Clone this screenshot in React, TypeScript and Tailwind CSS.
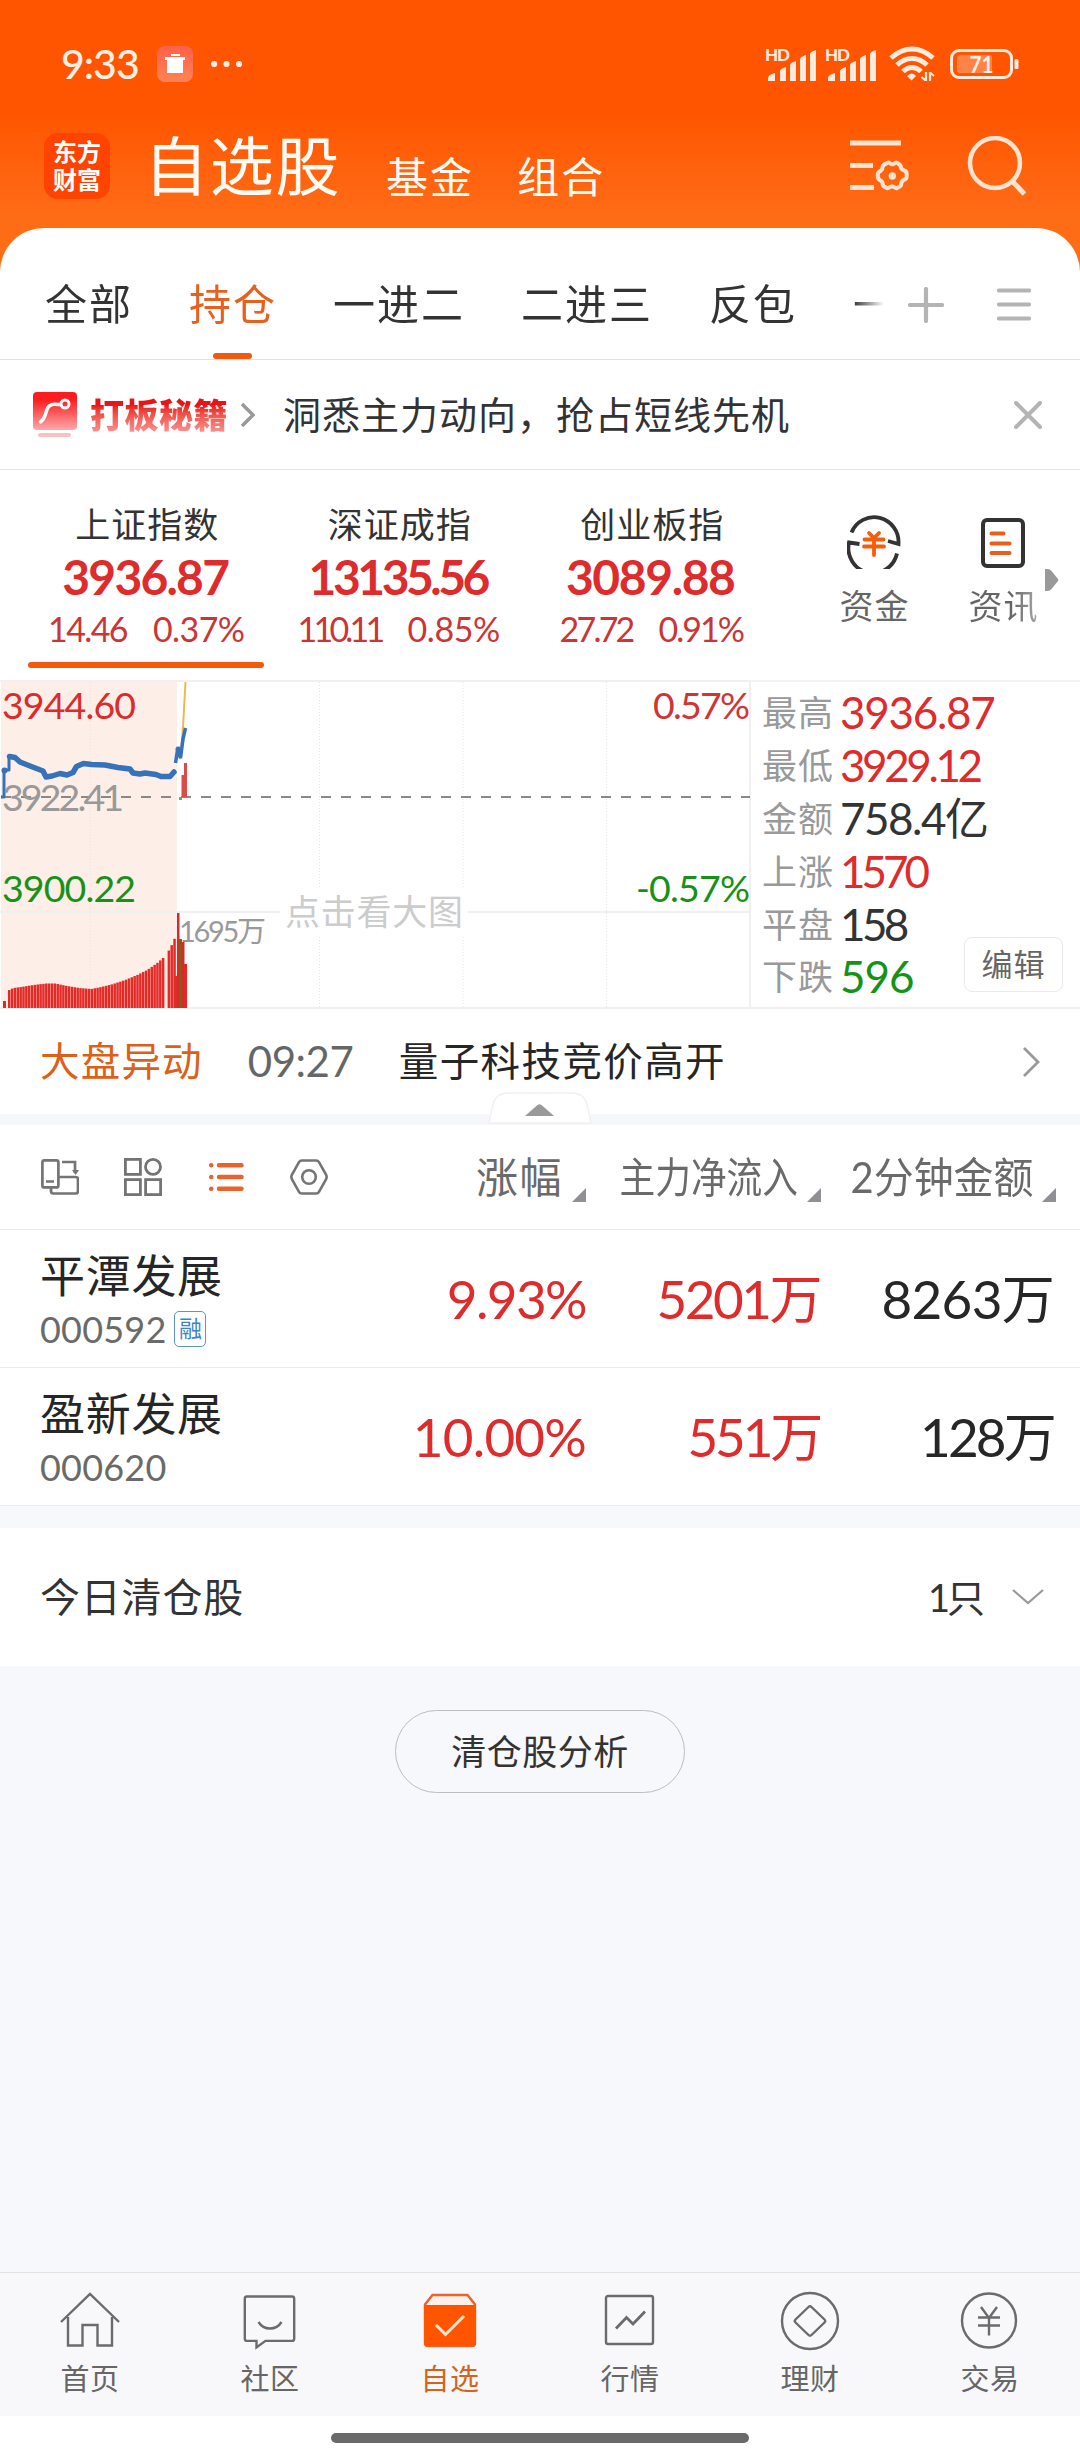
import React from 'react';

const RED = 'text-[#de2b2b]';
const GREEN = 'text-[#169216]';

const groups = ['全部', '持仓', '一进二', '二进三', '反包', '一'];

const indices = [
  { name: '上证指数', value: '3936.87', change: '14.46', percent: '0.37%', active: true, track: 'tracking-[-1.8px]', cTrack: 'tracking-[-1.6px]', pTrack: 'tracking-[-0.6px]' },
  { name: '深证成指', value: '13135.56', change: '110.11', percent: '0.85%', active: false, track: 'tracking-[-3.5px]', cTrack: 'tracking-[-3.8px]', pTrack: 'tracking-[-0.4px]' },
  { name: '创业板指', value: '3089.88', change: '27.72', percent: '0.91%', active: false, track: 'tracking-[-1.4px]', cTrack: 'tracking-[-2.8px]', pTrack: 'tracking-[-2px]' },
];

const stats = [
  { label: '最高', value: '3936.87', color: RED, track: 'tracking-[-1.3px]' },
  { label: '最低', value: '3929.12', color: RED, track: 'tracking-[-3.4px]' },
  { label: '金额', value: '758.4亿', color: 'text-[#333]', track: 'tracking-[-1.5px]' },
  { label: '上涨', value: '1570', color: RED, track: 'tracking-[-4px]' },
  { label: '平盘', value: '158', color: 'text-[#333]', track: 'tracking-[-3.6px]' },
  { label: '下跌', value: '596', color: GREEN, track: 'tracking-[-1px]' },
];

const stocks = [
  {
    name: '平潭发展', code: '000592', margin: true,
    cells: [
      { text: '9.93%', color: RED, track: 'tracking-[-1.6px]' },
      { text: '5201万', color: RED, track: 'tracking-[-2.5px]' },
      { text: '8263万', color: 'text-[#262626]', track: 'tracking-[-0.7px]' },
    ],
  },
  {
    name: '盈新发展', code: '000620', margin: false,
    cells: [
      { text: '10.00%', color: RED, track: 'tracking-[-0.8px]' },
      { text: '551万', color: RED, track: 'tracking-[-3.2px]' },
      { text: '128万', color: 'text-[#262626]', track: 'tracking-[-2.8px]' },
    ],
  },
];

// Volume profile as [x, top] pairs, the bars in between are interpolated
const volumeShape: [number, number][] = [
  [8, 990], [12, 988], [20, 987], [32, 985], [45, 983.5], [54, 983.5], [66, 986],
  [78, 988], [90, 989], [100, 987], [112, 984], [124, 980], [136, 975], [146, 970],
  [156, 963], [163, 957], [168, 950], [171, 944], [175, 935],
];

const volumeTop = (x: number) => {
  const i = volumeShape.findIndex(([px]) => px >= x);
  if (i <= 0) return volumeShape[i === 0 ? 0 : volumeShape.length - 1][1];
  const [x0, y0] = volumeShape[i - 1];
  const [x1, y1] = volumeShape[i];
  return y0 + ((y1 - y0) * (x - x0)) / (x1 - x0);
};

const volumeBars = Array.from({ length: 59 }, (_, i) => 8 + i * 2.85).filter((_, i) => i !== 55);

const SignalIcon = () => (
  <svg width="50" height="34" viewBox="0 0 50 34" fill="#ffeadd" className="block overflow-visible">
    <text x="-1" y="14" fontSize="17" fontWeight="900" fontFamily="Lato, sans-serif" textLength="25">HD</text>
    <path d="M2 34v-3q0-3 7-5v8z M14 34v-10q0-2 6-4v14z M24 34v-16q0-2 6-4v20z M34 34v-22q0-2 6-4v26z M44 34V7q0-2 6-4v31z" />
  </svg>
);

const WifiIcon = () => (
  <svg width="46" height="36" viewBox="0 0 46 36" fill="none" stroke="#ffeadd" strokeWidth="5">
    <path d="M2 12Q12 3 23 3t21 9" />
    <path d="M8 19Q15 12.500 23 12.500t15 6.500" />
    <path d="M14 25.500Q18 21.500 23 21.500t9 4" />
    <path d="M18 30q5-5 9 0l-4.500 4.500z" fill="#ffeadd" stroke="none" />
    <path d="M37 26v9M32.500 31l4 3.500M41 35v-9M45 30l-4-3.500" strokeWidth="2.200" />
  </svg>
);

const BatteryIcon = () => (
  <svg width="70" height="30" viewBox="0 0 70 30">
    <rect x="1.500" y="1.500" width="60" height="27" rx="7.500" fill="none" stroke="#ffeadd" strokeWidth="3" />
    <rect x="7" y="6" width="35" height="18" rx="2.500" fill="#ff8346" />
    <rect x="64.500" y="10" width="4" height="10" rx="1.500" fill="#ffeadd" />
    <text x="19.500" y="23.500" fontSize="23" fontWeight="700" fontFamily="Lato, sans-serif" fill="#fff0e6" textLength="24" lengthAdjust="spacingAndGlyphs">71</text>
  </svg>
);

const FilterIcon = () => (
  <svg width="60" height="54" viewBox="0 0 60 54" fill="none" stroke="#ffe3cf" strokeWidth="5">
    <path d="M0 4h51M0 26.500h23M0 48.500h24" />
    <path d="M36.500 24.500q2-2 3.800 0 2 1.600 4 0 2-2 4 0l2.300 2.200q0 3 3 4.600 3 .7 3 3.200v3.500q0 2-3 3-2.600 1.700-2.400 4.600-.5 2-3.900 3.400-1.500.5-3-1-2.300-1-4.300 0-2.300 2-4 .5-3-1-3.400-3.400 0-2.600-2-3.600-2.600-1.200-2.800-3.500v-3q.3-2.200 3-3.200 2-1.600 1.800-4 .4-2.300 3.900-3.300z" strokeWidth="4" strokeLinejoin="round" />
    <circle cx="42.300" cy="37" r="3.700" fill="#ffe3cf" stroke="none" />
  </svg>
);

const SearchIcon = () => (
  <svg width="60" height="60" viewBox="0 0 60 60" fill="none" stroke="#ffe3cf" strokeWidth="4.500">
    <circle cx="28" cy="27" r="25" />
    <path d="M45 45l12.500 13" strokeWidth="5" />
  </svg>
);

const PromoIcon = () => (
  <svg width="44" height="45" viewBox="0 0 44 45">
    <defs>
      <linearGradient id="promo" x1="0" y1="0" x2="0" y2="1">
        <stop offset="0.2" stopColor="#fb1d20" />
        <stop offset="1" stopColor="#fba9aa" />
      </linearGradient>
    </defs>
    <rect width="44" height="38" rx="4" fill="url(#promo)" />
    <rect x="5" y="41" width="33" height="4" rx="2" fill="#f8c1c3" />
    <path d="M7.500 30q4-3 6-11t11-6.500h3" fill="none" stroke="#fff" strokeWidth="3.500" strokeLinecap="round" />
    <circle cx="32" cy="12" r="4" fill="none" stroke="#fff" strokeWidth="3" />
  </svg>
);

const FundsIcon = () => (
  <svg width="54" height="54" viewBox="0 0 54 54" fill="none" stroke="#333" strokeWidth="3.800">
    <path d="M4.500 17.500A24.500 25 0 0 1 51.500 29l-10.500-3" />
    <path d="M50 38.500A24.500 25 0 0 1 2 27.500l10.500 1.500" />
    <path d="M22 18l5 5 5-5M17.500 24.500h19M17 31.500h20M27 23v17" stroke="#f55c0c" strokeLinecap="round" />
  </svg>
);

const NewsIcon = () => (
  <svg width="44" height="50" viewBox="0 0 44 50" fill="none" stroke="#333" strokeWidth="4">
    <rect x="2" y="2" width="40" height="46" rx="4" />
    <path d="M10.500 15.500h12M10.500 25.500h18M10.500 35h18" stroke="#ea5f1d" strokeLinecap="round" />
  </svg>
);

const IntradayChart = () => (
  <svg width="751" height="328" viewBox="0 680 751 328" className="block" fontFamily="Lato, 'Noto Sans CJK SC', sans-serif">
    <rect x="1" y="682" width="176" height="326" fill="#fdeee8" />
    <path d="M0 681h751M0 912h751" stroke="#f0f0f0" strokeWidth="2" />
    <path d="M750 681v327" stroke="#f0f0f0" strokeWidth="2" />
    <path d="M90 682v326M319.500 682v326M463 682v326M606.500 682v326" stroke="#e6e6e6" strokeDasharray="1 2" />
    <path d="M1 797h749" stroke="#888" strokeWidth="2" strokeDasharray="10 10" />
    <rect x="280" y="887" width="188" height="50" fill="#fff" />

    {/* Volume */}
    <rect x="3" y="1001" width="3" height="7" fill="#e02828" />
    {volumeBars.map(x => (
      <rect key={x} x={x} y={volumeTop(x)} width="2.5" height={1008 - volumeTop(x)} fill="#e42a27" />
    ))}
    <rect x="174" y="976" width="4" height="32" fill="#e42a27" />
    <rect x="177" y="913" width="2.5" height="95" fill="#d42c2c" />
    <rect x="179" y="939" width="3" height="69" fill="#7a6412" />
    <rect x="182" y="942" width="2.500" height="66" fill="#d42c2c" />
    <rect x="184" y="964" width="3" height="44" fill="#ee2424" />

    {/* Price */}
    <path d="M1 797h3v-27h5v-13" fill="none" stroke="#3572b9" strokeWidth="3" strokeLinejoin="round" />
    <circle cx="4.500" cy="770.500" r="3" fill="#3572b9" />
    <path d="M9.500 756.500l5.500 1 5 4.500 10 4 13 5 3 6 6-1 8-2.500 7 1.500 6-2.500 3.500-6 7-3 8 1 13.500.5 13 2.500 12 1.500 3 4 7 1 5-1 11 1.500 5 2h9l4-4.500" fill="none" stroke="#3572b9" strokeWidth="5.500" strokeLinejoin="round" strokeLinecap="round" />
    <path d="M175.500 748l5 11 2.500-32 2.500-45" fill="none" stroke="#efb94f" strokeWidth="2" />
    <path d="M175.500 763l2.500-16 2.500 11 2.500-19 2.500-11" fill="none" stroke="#3572b9" strokeWidth="3.500" />
    <path d="M181.500 775h2.500v-12h3v34h-5.500z" fill="#dd4b48" />
    <rect x="179" y="797" width="3" height="3" fill="#6fae4e" />

    <g fontSize="37.5">
      <text x="2" y="719" textLength="134" fill="#dc2b2b">3944.60</text>
      <text x="2" y="811" textLength="122" fill="#999">3922.41</text>
      <text x="2" y="902" textLength="134" fill="#169216">3900.22</text>
      <text x="653" y="719" textLength="97" fill="#d13434">0.57%</text>
      <text x="636" y="902" textLength="114" fill="#169216">-0.57%</text>
    </g>
    <text x="179" y="942" fontSize="29" textLength="87" fill="#999">1695万</text>
    <text x="285" y="925" fontSize="35" textLength="178" fill="#ccc">点击看大图</text>
  </svg>
);

const SortMark = () => (
  <svg width="14" height="14" viewBox="0 0 14 14" className="block shrink-0">
    <path d="M14 0v14H0z" fill="#8f8f94" />
  </svg>
);

const ToolIcons = () => (
  <div className="flex items-center">
    <svg width="38" height="36" viewBox="0 0 38 36" fill="none" stroke="#747474" strokeWidth="2.700">
      <rect x="1.400" y="1.400" width="16" height="27" rx="2" />
      <path d="M5 22.500h8M10 29v3q0 2.500 2.500 2.500h22q2.500 0 2.500-2.500V20q0-2-2.500-2H18M21 3h13v11" />
      <path d="M31 11h7l-3.500 5z" fill="#747474" stroke="none" />
    </svg>
    <svg width="38" height="38" viewBox="0 0 38 38" fill="none" stroke="#747474" strokeWidth="2.800" className="ml-[45px]">
      <rect x="1.400" y="1.400" width="15" height="15" />
      <circle cx="29" cy="8.900" r="7.500" />
      <rect x="1.400" y="21.600" width="15" height="15" />
      <rect x="21.600" y="21.600" width="15" height="15" />
    </svg>
    <svg width="36" height="30" viewBox="0 0 36 30" fill="none" stroke="#e8642a" strokeWidth="4.500" strokeLinecap="round" className="ml-[47px]">
      <path d="M2.200 3.200h.1M10 3.200h22.500M2.200 15h.1M10 15h22.500M2.200 26.800h.1M10 26.800h22.500" />
    </svg>
    <svg width="38" height="36" viewBox="0 0 38 36" fill="none" stroke="#747474" strokeWidth="2.600" className="ml-[45px]">
      <path d="M12 1.500h14q2 0 3 1.700l7 12.500q1.300 2.300 0 4.600l-7 12.500q-1 1.700-3 1.700H12q-2 0-3-1.700L2 20.300q-1.300-2.300 0-4.600L9 3.200q1-1.700 3-1.700z" />
      <circle cx="19" cy="18" r="6.800" />
    </svg>
  </div>
);

const navItems = [
  {
    label: '首页',
    icon: <path d="M1 31L30 3l29 28M8 26v28.500h14.500V34h15v20.500H52V26" strokeLinejoin="miter" />,
  },
  {
    label: '社区',
    icon: <path d="M6 5.500h46q2.200 0 2.200 2.200v40q0 2.200-2.200 2.200H25.500l-9 6.600v-6.600H7q-2.200 0-2.200-2.200v-40Q4.800 5.500 7 5.500M18.500 31q4 6.500 11.500 6.500T41.500 31" />,
  },
  {
    label: '自选',
    active: true,
    icon: (
      <>
        <path d="M12.500 4h35l7.500 9.500V52q0 3-3 3H8q-3 0-3-3V13.500z" fill="#fff1ea" stroke="#e8642a" />
        <path d="M4 14h52v38q0 3-3 3H7q-3 0-3-3z" fill="#ff5500" stroke="none" />
        <path d="M16 34l9.500 9.500L44 25" stroke="#ffe4d2" strokeWidth="3" />
      </>
    ),
  },
  {
    label: '行情',
    icon: <><rect x="6" y="5" width="47" height="48" rx="2" /><path d="M16 37.500l10.500-11 6.500 6.500L45 20.500" strokeWidth="2.800" /></>,
  },
  {
    label: '理财',
    icon: <><circle cx="30" cy="30" r="28" /><path d="M28.500 16q1.500-1.500 3 0L44.500 28.500q1.500 1.500 0 3L31.500 44q-1.500 1.500-3 0L15.500 31.500q-1.500-1.500 0-3z" /></>,
  },
  {
    label: '交易',
    icon: <><circle cx="29" cy="29.500" r="27" /><path d="M21 16l8 11 8-11M18 26.500h22M18 34.500h22M29 27v17.500" /></>,
  },
];

export default function App() {
  return (
    <div className="w-[1080px] h-[2460px] flex flex-col bg-[#f7f8fb] text-[#333] overflow-hidden font-['Lato','Noto_Sans_CJK_SC',sans-serif] whitespace-nowrap">
      {/* Header */}
      <div className="bg-[#ff6c16]">
        <div className="h-[228px] bg-linear-to-b from-[#ff5500] from-50% to-[#ff6c16] to-95%">
          <div className="h-32 pl-[61px] pr-[60px] flex items-center">
            <span className="text-[41px] font-medium text-[#fff0e6] tracking-[-1px] w-[96px]">9:33</span>
            <svg width="36" height="36" viewBox="0 0 36 36">
              <defs>
                <linearGradient id="trash" x1="0" y1="0" x2="0" y2="1">
                  <stop offset="0" stopColor="#ff6248" />
                  <stop offset="1" stopColor="#ff8354" />
                </linearGradient>
              </defs>
              <rect width="36" height="36" rx="8" fill="url(#trash)" />
              <path d="M14 8h9v2h-9zM8 11h20v3h-2v13H10V14H8z" fill="#fff" />
            </svg>
            <svg width="32" height="8" viewBox="0 0 32 8" fill="#ffeadd" className="ml-[18px]">
              <circle cx="3.200" cy="4" r="3.100" />
              <circle cx="15.500" cy="4" r="3.100" />
              <circle cx="28" cy="4" r="3.100" />
            </svg>
            <div className="ml-auto flex items-center">
              <SignalIcon />
              <div className="ml-[10px]"><SignalIcon /></div>
              <div className="ml-[13px]"><WifiIcon /></div>
              <div className="ml-[15px]"><BatteryIcon /></div>
            </div>
          </div>

          <div className="h-[76px] pl-[44px] pr-[53px] flex items-center text-[#fffaf3]">
            <div className="w-[66px] h-[66px] rounded-[14px] bg-[#ff4300] flex flex-col items-center justify-center text-[24px] leading-[28px] font-bold text-white">
              <span>东方</span>
              <span>财富</span>
            </div>
            <span className="ml-[34px] text-[64px] leading-[76px] tracking-[1.7px]">自选股</span>
            <span className="ml-[45px] mt-[21px] text-[42px] leading-[44px] tracking-[2px]">基金</span>
            <span className="ml-[43px] mt-[21px] text-[42px] leading-[44px] tracking-[2px]">组合</span>
            <div className="ml-auto flex items-center">
              <FilterIcon />
              <div className="ml-[57px]"><SearchIcon /></div>
            </div>
          </div>
        </div>

        {/* Group tabs */}
        <div className="h-[132px] bg-white rounded-t-[44px] border-b border-[#e2e2e2] flex">
          <div className="w-[900px] pl-[45px] pt-[21px] flex gap-[56px] overflow-hidden mask-r-from-[853px] mask-r-to-[884px]">
            {groups.map((g, i) => (
              <div key={i} className={`relative shrink-0 h-[110px] text-[42px] leading-[110px] tracking-[2px] ${g === '持仓' ? 'text-[#e8601c]' : 'text-[#333]'}`}>
                <span className="block">{g}</span>
                {g === '持仓' && <div className="absolute left-6 bottom-0 w-[39px] h-[6px] rounded-full bg-[#f4580f]" />}
              </div>
            ))}
          </div>
          <svg width="36" height="36" viewBox="0 0 36 36" stroke="#b4b4b4" strokeWidth="4.200" strokeLinecap="round" className="ml-2 mt-[59px]">
            <path d="M18 2v32M2 18h32" />
          </svg>
          <svg width="34" height="36" viewBox="0 0 34 36" stroke="#b4b4b4" strokeWidth="4.200" strokeLinecap="round" className="ml-[53px] mt-[59px]">
            <path d="M2 3.500h30M2 17.500h30M2 31.500h30" />
          </svg>
        </div>
      </div>

      {/* Promo */}
      <div className="h-[110px] bg-white border-b border-[#e4e4e4] pl-[33px] pr-[38px] flex items-center">
        <PromoIcon />
        <span className="ml-[13px] text-[34px] leading-[40px] tracking-[0.5px] font-black bg-linear-to-b from-[#e81416] from-25% to-[#f99a9b] bg-clip-text text-transparent">打板秘籍</span>
        <svg width="15" height="26" viewBox="0 0 15 26" fill="none" stroke="#999" strokeWidth="3.500" className="ml-[12px]">
          <path d="M2 2l11 11L2 24" />
        </svg>
        <span className="ml-[28px] text-[38px] tracking-[1px]">洞悉主力动向，抢占短线先机</span>
        <svg width="28" height="28" viewBox="0 0 28 28" stroke="#b4b4b4" strokeWidth="4" strokeLinecap="round" className="ml-auto">
          <path d="M2 2l24 24M26 2L2 26" />
        </svg>
      </div>

      {/* Indices */}
      <div className="h-[210px] bg-white pl-5 flex">
        {indices.map(item => (
          <div key={item.name} className="w-[252.5px] pt-[30px] flex flex-col items-center">
            <span className="ml-0.5 text-[35px] leading-[48px] tracking-[1px]">{item.name}</span>
            <span className={`text-[48px] leading-[56px] mt-[1px] -ml-0.5 font-bold ${item.track} ${RED}`}>{item.value}</span>
            <div className="flex gap-[26px] mt-[2px] text-[34px] leading-[44px] text-[#cc3535]">
              <span className={item.cTrack}>{item.change}</span>
              <span className={item.pTrack}>{item.percent}</span>
            </div>
            {item.active && <div className="mt-[11px] w-[236px] h-[6px] rounded-full bg-[#f55809]" />}
          </div>
        ))}
        <div className="ml-[31px] w-[130px] pt-[45px] flex flex-col items-center">
          <FundsIcon />
          <span className="mt-[13px] ml-0.5 text-[34px] leading-[48px] tracking-[1px] text-[#666]">资金</span>
        </div>
        <div className="w-[130px] pt-[48px] -ml-px flex flex-col items-center">
          <NewsIcon />
          <span className="mt-[14px] ml-0.5 text-[34px] leading-[48px] tracking-[1px] text-transparent bg-clip-text bg-linear-to-r from-[#666] from-60% to-[#aaa]">资讯</span>
        </div>
        <svg width="14" height="22" viewBox="0 0 14 22" className="-ml-[23px] mt-[99px]">
          <path d="M0 0h3q2 0 3.500 2L13 10q.7 1 0 2l-6.500 8q-1.500 2-3.500 2H0z" fill="#999" />
        </svg>
      </div>

      {/* Chart + stats */}
      <div className="h-[329px] bg-white border-b-2 border-[#f0f0f0] flex">
        <IntradayChart />
        <div className="relative flex-1 border-t-2 border-[#f3f3f3] pl-[11px] pt-[4px]">
          {stats.map(s => (
            <div key={s.label} className="h-[52.8px] flex items-center">
              <span className="w-[78px] text-[35px] leading-[52px] tracking-[1px] text-[#999]">{s.label}</span>
              <span className={`text-[44px] leading-[52px] ${s.track} ${s.color}`}>{s.value}</span>
            </div>
          ))}
          <button className="absolute right-[17px] bottom-[15px] w-[99px] h-[55px] rounded-lg border border-[#eaeaea] bg-white text-[31px] tracking-[1px] text-[#666]">编辑</button>
        </div>
      </div>

      {/* Market event */}
      <div className="relative h-[105px] bg-white pl-[40px] pr-[40px] flex items-center">
        <span className="text-[39.5px] leading-[60px] -mt-0.5 tracking-[1.200px] text-[#dd6018]">大盘异动</span>
        <span className="ml-[45px] w-[108px] text-[42px] leading-[60px] -mt-0.5 tracking-[-0.5px] text-[#666]">09:27</span>
        <span className="ml-[43px] text-[39.5px] leading-[60px] -mt-0.5 tracking-[1.400px] text-[#262626]">量子科技竞价高开</span>
        <svg width="18" height="30" viewBox="0 0 18 30" fill="none" stroke="#999" strokeWidth="2.800" className="ml-auto">
          <path d="M2 1l14 14L2 29" />
        </svg>
        <svg width="104" height="32" viewBox="0 0 104 32" className="absolute left-[488px] bottom-[-10px] z-10">
          <path d="M1 31L5 12Q8 1 20 1h64q12 0 15 11l4 19z" fill="#fff" stroke="#f1f1f3" strokeWidth="1.500" />
          <path d="M37 24L49.500 13q2-1.500 4 0L66 24z" fill="#999" />
        </svg>
      </div>
      <div className="h-[11px] bg-[#f6f7fb]" />

      {/* List header */}
      <div className="h-[105px] bg-white border-b border-[#ebebeb] pl-[41px] pr-6 flex items-center text-[42px] leading-[60px] text-[#6a6a6a]">
        <ToolIcons />
        <div className="ml-auto flex items-end">
          <span className="tracking-[1.500px]">涨幅</span>
          <div className="ml-[9px] pb-[5px]"><SortMark /></div>
        </div>
        <div className="w-[235px] flex items-end justify-end">
          <span className="origin-right scale-x-[0.85]">主力净流入</span>
          <div className="ml-[9px] pb-[5px]"><SortMark /></div>
        </div>
        <div className="w-[235px] flex items-end justify-end">
          <span className="origin-right scale-x-[0.95]">2分钟金额</span>
          <div className="ml-[9px] pb-[5px]"><SortMark /></div>
        </div>
      </div>

      {/* Stocks */}
      {stocks.map(stock => (
        <div key={stock.code} className="h-[138px] bg-white border-b border-[#ebebeb] pl-[40px] pr-[26px] flex items-center">
          <div className="flex-1">
            <div className="text-[45px] leading-[60px] tracking-[0.7px] text-[#262626]">{stock.name}</div>
            <div className="flex items-center h-[46px]">
              <span className="text-[36px] tracking-[0.2px] text-[#6a6a6a]">{stock.code}</span>
              {stock.margin && (
                <span className="ml-[8px] w-[32px] h-[36px] rounded-[5px] border-[1.5px] border-[#5d94cc] text-[#3f82c6] text-[23px] leading-[33px] text-center">融</span>
              )}
            </div>
          </div>
          {stock.cells.map((c, i) => (
            <span key={i} className={`w-[234px] text-right text-[53px] leading-[64px] ${c.track} ${c.color}`}>{c.text}</span>
          ))}
        </div>
      ))}
      <div className="h-[22px]" />

      {/* Cleared today */}
      <div className="h-[138px] bg-white pl-[40px] pr-[36px] flex items-center text-[40px]">
        <span className="tracking-[0.8px]">今日清仓股</span>
        <span className="ml-auto text-[38px] tracking-[-3px]">1只</span>
        <svg width="32" height="18" viewBox="0 0 32 18" fill="none" stroke="#999" strokeWidth="2.200" className="ml-[30px]">
          <path d="M1 2l15 13L31 2" />
        </svg>
      </div>

      <div className="flex-1 pt-[44px] flex justify-center items-start">
        <button className="w-[290px] h-[83px] rounded-full border border-[#bdbdbf] text-[35px] tracking-[0.500px]">清仓股分析</button>
      </div>

      {/* Bottom nav */}
      <div className="h-[144px] border-t border-[#e2e2e4] bg-[#f8f8fb] grid grid-cols-6">
        {navItems.map(n => (
          <div key={n.label} className="pt-[18px] flex flex-col items-center">
            <svg width="60" height="60" viewBox="0 0 60 60" fill="none" stroke="#6b6b6b" strokeWidth="2.400">{n.icon}</svg>
            <span className={`mt-[8px] text-[29px] leading-[40px] tracking-[0.500px] ${n.active ? 'text-[#d6621c]' : 'text-[#666]'}`}>{n.label}</span>
          </div>
        ))}
      </div>
      <div className="h-[44px] bg-white pt-[17px]">
        <div className="mx-auto w-[418px] h-[10px] rounded-full bg-[#6a6a6a]" />
      </div>
    </div>
  );
}
